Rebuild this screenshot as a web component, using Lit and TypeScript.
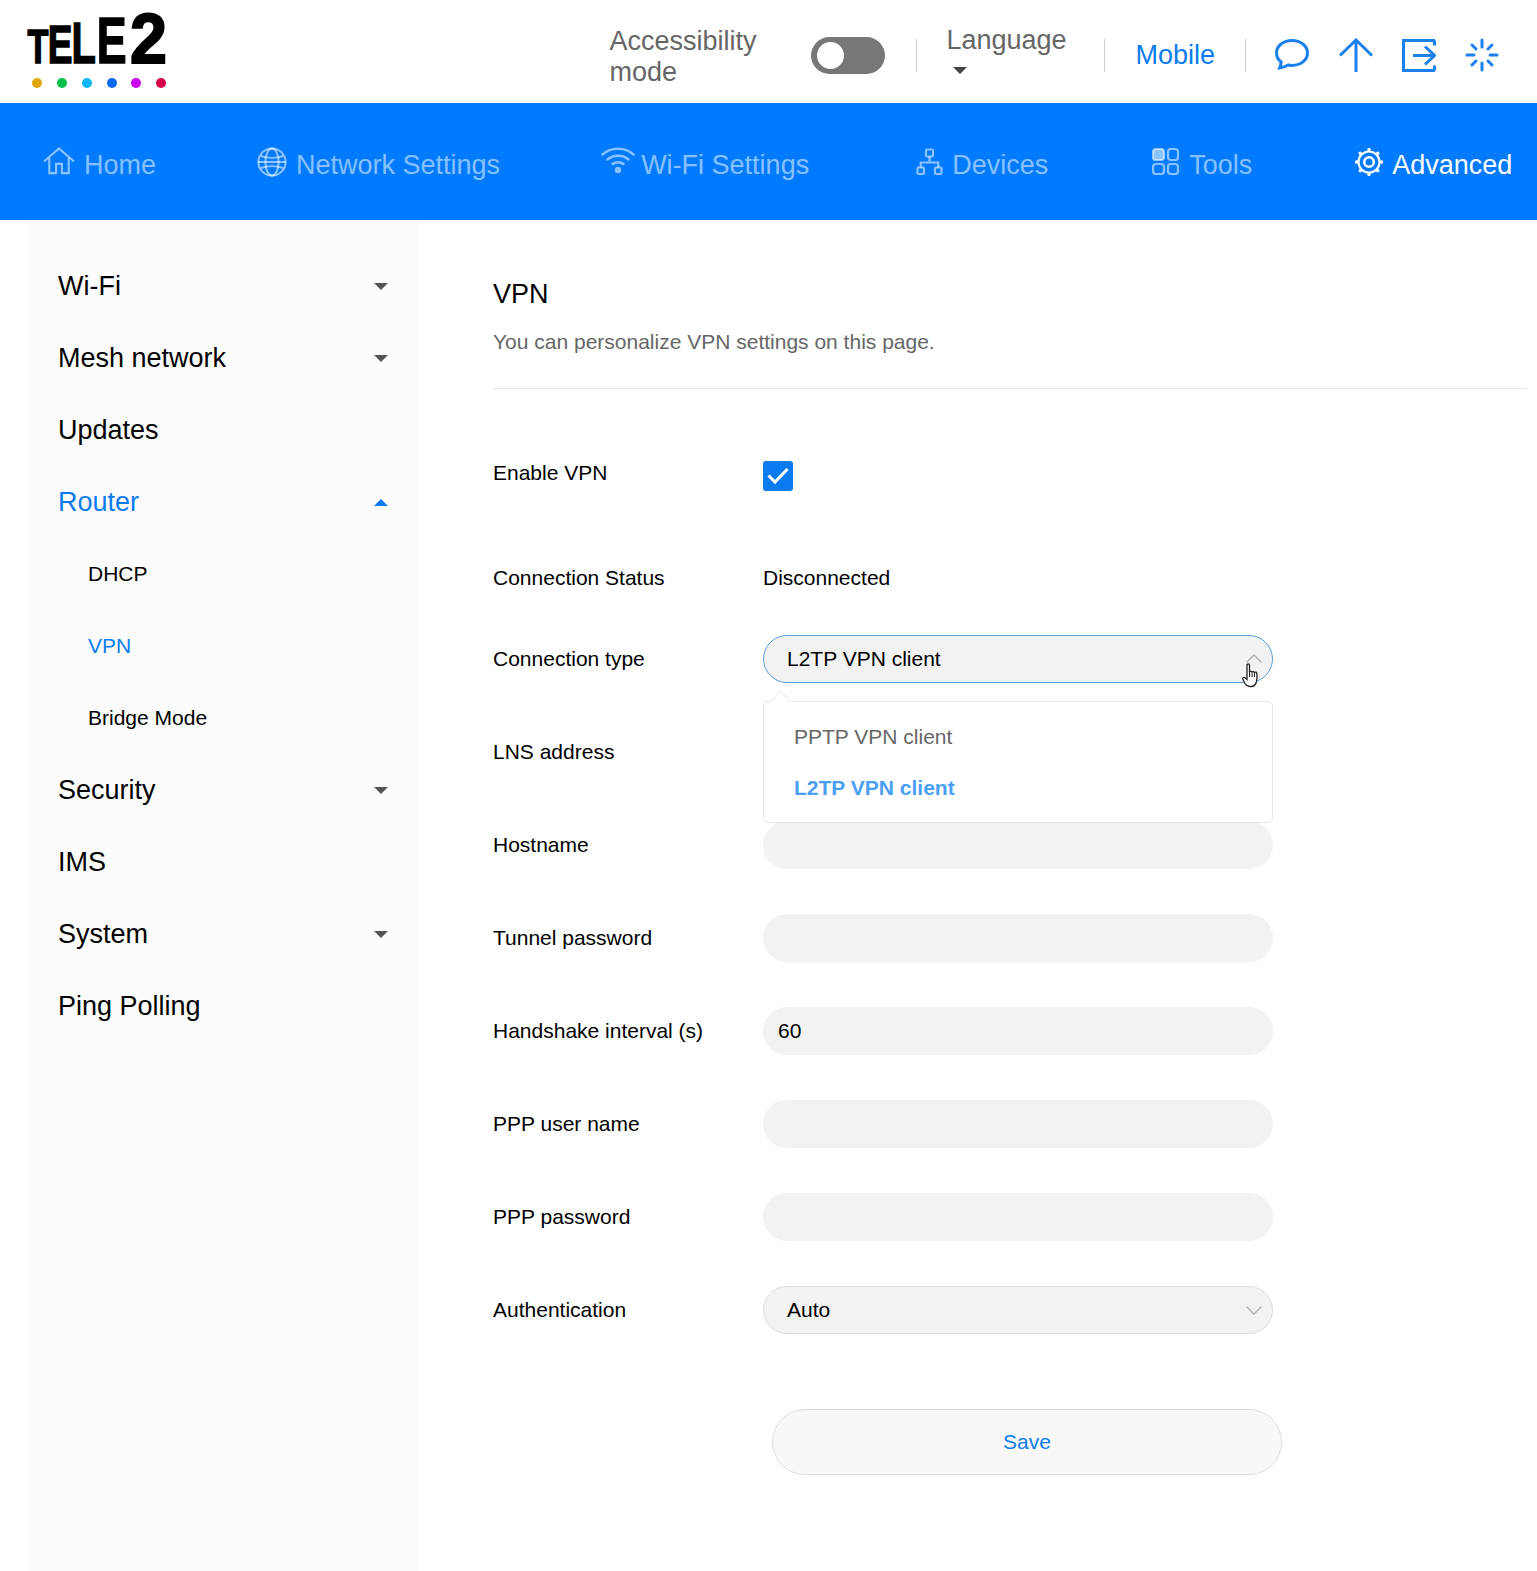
import { LitElement, html, css, svg, nothing } from "lit";
import { customElement } from "lit/decorators.js";

const gearDots = [0, 45, 90, 135, 180, 225, 270, 315].map((a) => {
  const r = (a * Math.PI) / 180;
  return svg`<circle cx=${14 + 12.4 * Math.cos(r)} cy=${14 + 12.4 * Math.sin(r)} r="1.700" fill="currentColor" stroke="none"/>`;
});

const ic = {
  home: html`<svg class="ni" width="32" height="30" viewBox="0 0 33 30" fill="none" stroke="currentColor" stroke-width="2.200"><path d="M1 15.500 16.500 2 32 15.500"/><path d="M6.500 12v15.500h7V18h6v9.500h7V12"/></svg>`,
  globe: html`<svg class="ni" width="30" height="32" viewBox="0 0 32 32" fill="none" stroke="currentColor" stroke-width="2.200"><circle cx="16" cy="16" r="14.500"/><ellipse cx="16" cy="16" rx="7" ry="14.500"/><path d="M4 9.500c7 2.500 17 2.500 24 0M4 22.500c7-2.500 17-2.500 24 0M1.500 16h29"/></svg>`,
  wifi: html`<svg class="ni" width="34" height="28" viewBox="0 0 34 28" fill="none" stroke="currentColor" stroke-width="2.500" stroke-linecap="round"><path d="M1.500 8.500C10 .8 24 .8 32.500 8.500M6.500 13.500c6-5 15-5 21 0M11.500 18c3-2.500 8-2.500 11 0"/><circle cx="17" cy="24" r="3.200" fill="currentColor" stroke="none"/></svg>`,
  dev: html`<svg class="ni low" width="27" height="28" viewBox="0 0 27 28" fill="none" stroke="currentColor" stroke-width="2.200"><rect x="10" y="1.500" width="7" height="7" rx="1"/><rect x="1.500" y="19.500" width="6.500" height="6.500" rx="1"/><rect x="19" y="19.500" width="6.500" height="6.500" rx="1"/><path d="M13.500 8.500v6M4.700 19.500v-5h17.600v5"/></svg>`,
  tools: html`<svg class="ni low" width="27" height="27" viewBox="0 0 27 27" fill="none" stroke="currentColor" stroke-width="2.200"><rect x="1" y="1" width="11" height="11" rx="3" fill="currentColor"/><rect x="16" y="1" width="10" height="11" rx="3"/><rect x="1" y="16" width="11" height="10" rx="3"/><rect x="16" y="16" width="10" height="10" rx="3"/></svg>`,
  gear: html`<svg class="ni low" width="28" height="28" viewBox="0 0 28 28" fill="none" stroke="currentColor" stroke-width="2.200"><circle cx="14" cy="14" r="10.500"/><circle cx="14" cy="14" r="4.800" stroke-width="2.600"/>${gearDots}</svg>`,
  chat: html`<svg width="34" height="33" viewBox="0 0 34 33" fill="none" stroke="currentColor" stroke-width="3"><path d="M17 1.500C8.500 1.500 1.500 6.800 1.500 14c0 3.800 1.800 6.800 4.700 9-.2 2-1 4.500-1.600 6 3-.4 6.200-1.500 8.600-3 1.300.3 2.500.4 3.800.4 8.500 0 15.500-5.200 15.500-12.400S25.500 1.500 17 1.500z"/></svg>`,
  up: html`<svg width="34" height="34" viewBox="0 0 34 34" fill="none" stroke="currentColor" stroke-width="3"><path d="M17 34V2M1 17.500 17 2l16 15.500"/></svg>`,
  exit: html`<svg width="34" height="33" viewBox="0 0 34 33" fill="none" stroke="currentColor" stroke-width="3"><path d="M33 1.500H1.500v30H33M32.500 1.500v5M32.500 31.500v-5M11 16.500h21M23 7.500l9.500 9-9.500 9"/></svg>`,
  spin: html`<svg width="34" height="34" viewBox="0 0 34 34" fill="none" stroke="currentColor" stroke-width="3" stroke-linecap="round"><path d="M17 2v7M17 25v7M2 17h7M25 17h7M7 7l4 4M23 23l4 4M27 7l-4 4M11 23l-4 4"/></svg>`,
};

const tri = (up = false) => html`<svg class="tri" width="14" height="7" viewBox="0 0 14 7" fill="currentColor"><path d=${up ? "M7 0 14 7H0z" : "M0 0h14L7 7z"}/></svg>`;

@customElement("app-root")
export class AppRoot extends LitElement {
  static styles = css`
    :host { display: block; min-height: 1571px; background: #fff; font-family: "Liberation Sans", Arial, sans-serif; color: #000; font-size: 21px; }
    .top { height: 103px; display: flex; align-items: stretch; }
    .logo { margin-left: 27px; display: block; }
    .tools { margin-left: auto; display: flex; align-items: center; color: #666; font-size: 27px; line-height: 31px; padding: 7px 38px 0 0; box-sizing: border-box; height: 100%; }
    .acc { width: 202px; padding-top: 4px; }
    .tog { width: 74px; height: 37px; border-radius: 19px; background: #777; display: flex; align-items: center; padding-left: 6px; box-sizing: border-box; margin-right: 31px; }
    .tog i { display: block; width: 27px; height: 27px; border-radius: 50%; background: #fff; }
    .sep { width: 1px; height: 33px; background: #ccc; }
    .lang { margin-left: 29px; margin-right: 38px; width: 120px; padding-bottom: 11px; }
    .lang .tri { display: block; margin: 11px 0 0 7px; color: #444; }
    .mob { color: #0a7bf0; margin: 0 30px; }
    .ibtn { color: #1a80ee; display: flex; margin-left: 29px; }
    .ibtn.second { margin-left: 30px; }
    .nav { height: 117px; background: #007aff; display: flex; padding: 43px 0 0 43px; box-sizing: border-box; gap: 101px; color: rgba(255,255,255,.55); font-size: 27px; line-height: 38px; white-space: nowrap; }
    .nav a { display: flex; gap: 9px; height: 38px; }
    .nav a.wifi { gap: 6px; }
    .nav a.dev { margin-left: 6px; }
    .nav a.tl { margin-left: 3px; gap: 10px; }
    .nav a.on { color: #fff; margin-left: 2px; }
    .ni { display: block; flex: none; }
    .ni.low { margin-top: 2px; }
    .body { display: flex; align-items: stretch; min-height: 1351px; }
    .side { width: 390px; margin-left: 28px; background: #fcfcfc; padding-top: 30px; box-sizing: border-box; flex: none; }
    .si { height: 72px; display: flex; align-items: center; justify-content: space-between; padding: 0 30px; font-size: 27px; }
    .si.sub { font-size: 21px; padding-left: 60px; }
    .si .tri { color: #555; }
    .si.b, .si.b .tri { color: #0a7bf0; }
    .main { flex: 1; padding: 56px 10px 0 75px; min-width: 0; }
    h1 { margin: 0; font-weight: 400; font-size: 27px; line-height: 36px; }
    .desc { color: #666; line-height: 36px; margin-top: 12px; }
    .hr { height: 1px; background: #e4e4e4; margin-top: 28px; margin-bottom: 60px; }
    .row { display: flex; align-items: center; min-height: 48px; margin-bottom: 45px; }
    .row.m57 { margin-bottom: 57px; }
    .row.m33 { margin-bottom: 33px; }
    .row label { width: 270px; flex: none; }
    .inp { width: 510px; height: 48px; border-radius: 24px; background: #f2f2f2; box-sizing: border-box; display: flex; align-items: center; padding: 0 15px; }
    .sel { border: 1px solid #dcdcdc; padding: 0 10px 0 23px; justify-content: space-between; }
    .open { border-color: #5a9fe0; }
    .wrap { position: relative; }
    .cb { width: 30px; height: 30px; background: #0a7bf0; border-radius: 3px; display: flex; align-items: center; justify-content: center; margin-top: 5px; }
    .chev { color: #aeaeae; display: block; }
    .chev.up { margin-top: -2px; }
    .menu { position: absolute; left: 0; top: 66px; width: 510px; height: 122px; background: #fff; border: 1px solid #e6e6ea; border-radius: 5px; box-sizing: border-box; padding: 9px 30px; z-index: 2; }
    .menu div { height: 51px; display: flex; align-items: center; color: #666; }
    .menu div.sel-o { color: #4a9ff5; font-weight: 700; }
    .notch { position: absolute; left: 9px; top: -8px; width: 14px; height: 14px; background: #fff; border: 1px solid #e6e6ea; border-right: 0; border-bottom: 0; transform: rotate(45deg); }
    .cursor { position: absolute; left: 479px; top: 28px; z-index: 3; display: block; }
    .save { width: 510px; height: 66px; margin: 75px 0 0 279px; border-radius: 33px; background: #f8f8f8; border: 1px solid #dedede; color: #0a7bf0; display: flex; align-items: center; justify-content: center; box-sizing: border-box; }
  `;

  private row(label: string, val: unknown, cls = "") {
    return html`<div class="row ${cls}"><label>${label}</label>${val}</div>`;
  }

  render() {
    const side = [["Wi-Fi", "d"], ["Mesh network", "d"], ["Updates", ""], ["Router", "u"]];
    const side2 = [["Security", "d"], ["IMS", ""], ["System", "d"], ["Ping Polling", ""]];
    const item = ([t, a]: string[]) => html`<div class="si ${a === "u" ? "b" : ""}"><span>${t}</span>${a ? tri(a === "u") : nothing}</div>`;
    const dots = [["#e0a80e", 10], ["#00c04b", 35], ["#0bb8f5", 60], ["#0a66f0", 85], ["#c800f0", 109], ["#d6004a", 134]] as [string, number][];
    return html`
      <div class="top">
        <svg class="logo" width="145" height="98" viewBox="0 0 145 98">
          <text transform="translate(.5 63) scale(.7 1)" font-family="Liberation Sans" font-weight="700" fill="#000" stroke="#000" stroke-width="1.500"><tspan x="0" font-size="49">T</tspan><tspan x="29" font-size="53">E</tspan><tspan x="63" font-size="57">L</tspan><tspan x="99" font-size="64">E</tspan></text>
          <text transform="translate(103 63) scale(.95 1)" font-family="Liberation Sans" font-weight="700" font-size="70" fill="#000" stroke="#000" stroke-width="2">2</text>
          ${dots.map(([c, x]) => svg`<circle cx=${x} cy="83" r="5" fill=${c}/>`)}
        </svg>
        <div class="tools">
          <div class="acc">Accessibility<br />mode</div>
          <div class="tog"><i></i></div>
          <div class="sep"></div>
          <div class="lang">Language${tri()}</div>
          <div class="sep"></div>
          <div class="mob">Mobile</div>
          <div class="sep"></div>
          <span class="ibtn">${ic.chat}</span>
          <span class="ibtn second">${ic.up}</span>
          <span class="ibtn">${ic.exit}</span>
          <span class="ibtn">${ic.spin}</span>
        </div>
      </div>
      <div class="nav">
        <a>${ic.home}Home</a>
        <a>${ic.globe}Network Settings</a>
        <a class="wifi">${ic.wifi}Wi-Fi Settings</a>
        <a class="dev">${ic.dev}Devices</a>
        <a class="tl">${ic.tools}Tools</a>
        <a class="on">${ic.gear}Advanced</a>
      </div>
      <div class="body">
        <div class="side">
          ${side.map(item)}
          <div class="si sub">DHCP</div>
          <div class="si sub b">VPN</div>
          <div class="si sub">Bridge Mode</div>
          ${side2.map(item)}
        </div>
        <div class="main">
          <h1>VPN</h1>
          <div class="desc">You can personalize VPN settings on this page.</div>
          <div class="hr"></div>
          ${this.row("Enable VPN", html`<div class="cb"><svg width="22" height="18" viewBox="0 0 22 18" fill="none" stroke="#fff" stroke-width="3"><path d="M1.500 8.500 8 15 20.500 2"/></svg></div>`, "m57")}
          ${this.row("Connection Status", html`<span>Disconnected</span>`, "m33")}
          ${this.row("Connection type", html`<div class="wrap">
            <div class="inp sel open"><span>L2TP VPN client</span><svg class="chev up" width="16" height="9" viewBox="0 0 16 9" fill="none" stroke="currentColor" stroke-width="1.300"><path d="M.5 8.500 8 1l7.500 7.500"/></svg></div>
            <div class="menu"><span class="notch"></span><div>PPTP VPN client</div><div class="sel-o">L2TP VPN client</div></div>
            <svg class="cursor" width="18" height="25" viewBox="0 0 18 25" fill="#fff" stroke="#222" stroke-width="1.300"><path d="M5 2c0-1.500 2.500-1.500 2.500 0v7c.3-1 2.300-1 2.500.3.300-1 2.300-.9 2.500.4.400-.8 2.200-.7 2.300.8.200 3 .3 5.500-.3 8-.5 2.500-2 4.500-5 5-3 .4-5-.7-6.500-3L1 16.500c-.9-1.500.7-2.800 2-1.700l2 1.700z"/><path d="M7.500 9v5M10 9.500v4.500M12.500 10v4" stroke-width="1"/></svg>
          </div>`)}
          ${this.row("LNS address", html`<div class="inp"></div>`)}
          ${this.row("Hostname", html`<div class="inp"></div>`)}
          ${this.row("Tunnel password", html`<div class="inp"></div>`)}
          ${this.row("Handshake interval (s)", html`<div class="inp">60</div>`)}
          ${this.row("PPP user name", html`<div class="inp"></div>`)}
          ${this.row("PPP password", html`<div class="inp"></div>`)}
          ${this.row("Authentication", html`<div class="inp sel"><span>Auto</span><svg class="chev" width="16" height="9" viewBox="0 0 16 9" fill="none" stroke="currentColor" stroke-width="1.300"><path d="M.5.500 8 8l7.500-7.500"/></svg></div>`)}
          <div class="save">Save</div>
        </div>
      </div>
    `;
  }
}
